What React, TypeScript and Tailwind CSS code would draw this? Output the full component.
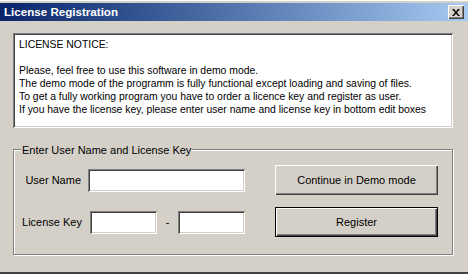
const sunken =
  "bg-white shadow-[inset_1px_1px_0_#808080,inset_-1px_-1px_0_#ffffff,inset_2px_2px_0_#404040,inset_-2px_-2px_0_#d4d0c8]";
const raised =
  "bg-[#d4d0c8] shadow-[inset_1px_1px_0_#ffffff,inset_-1px_-1px_0_#404040,inset_-2px_-2px_0_#808080]";

function TextBox({ className }: { className: string }) {
  return <div className={`h-[23px] ${sunken} ${className}`} />;
}

export default function App() {
  return (
    <div
      className="flex h-[274px] w-[468px] flex-col overflow-hidden bg-[#d4d0c8] text-[11px] text-black"
      style={{ fontFamily: '"Liberation Sans", Arial, sans-serif' }}
    >
      <div className="h-[3px] border-t border-white" />
      {/* title bar */}
      <div className="flex h-[18px] items-center justify-between bg-gradient-to-r from-[#0a246a] to-[#a6caf0] pl-[4px] pr-[4px]">
        <span className="text-[11.6px] font-bold text-white">License Registration</span>
        <button
          type="button"
          className={`flex h-[14px] w-[16px] items-center justify-center ${raised}`}
        >
          <svg width="8" height="7" viewBox="0 0 8 7">
            <path d="M0 0h2l2 2.5L6 0h2L5 3.5 8 7H6L4 4.5 2 7H0l3-3.5z" fill="#000" />
          </svg>
        </button>
      </div>

      <div className="flex flex-1 flex-col border-b-2 border-[#404040] pl-[13px] pr-[15px] pt-[12px]">
        {/* notice */}
        <div
          className={`h-[95px] w-[440px] whitespace-nowrap px-[6px] pt-[5px] text-[10.4px] leading-[13px] ${sunken}`}
        >
          <p>LICENSE NOTICE:</p>
          <p>&nbsp;</p>
          <p>Please, feel free to use this software in demo mode.</p>
          <p>The demo mode of the programm is fully functional except loading and saving of files.</p>
          <p>To get a fully working program you have to order a licence key and register as user.</p>
          <p>If you have the license key, please enter user name and license key in bottom edit boxes</p>
        </div>

        {/* group box */}
        <div className="relative mt-[21px] h-[106px] w-[440px] border border-[#808080] shadow-[1px_1px_0_#ffffff,inset_1px_1px_0_#ffffff]">
          <span className="absolute -top-[6px] left-[7px] bg-[#d4d0c8] px-[1px] leading-[13px]">
            Enter User Name and License Key
          </span>
          <div className="flex flex-col gap-[12px] pt-[15px]">
            <div className="flex h-[30px] items-center">
              <span className="w-[67px] text-right">User Name</span>
              <TextBox className="ml-[7px] w-[157px]" />
              <button type="button" className={`ml-[30px] h-[30px] w-[163px] ${raised}`}>
                Continue in Demo mode
              </button>
            </div>
            <div className="flex h-[30px] items-center">
              <span className="w-[68px] text-right">License Key</span>
              <TextBox className="ml-[8px] w-[67px]" />
              <span className="w-[21px] text-center">-</span>
              <TextBox className="w-[67px]" />
              <button
                type="button"
                className="ml-[30px] h-[30px] w-[163px] border border-black bg-[#d4d0c8] shadow-[inset_1px_1px_0_#ffffff,inset_-1px_-1px_0_#404040,inset_-2px_-2px_0_#808080]"
              >
                Register
              </button>
            </div>
          </div>
        </div>
      </div>
    </div>
  );
}
